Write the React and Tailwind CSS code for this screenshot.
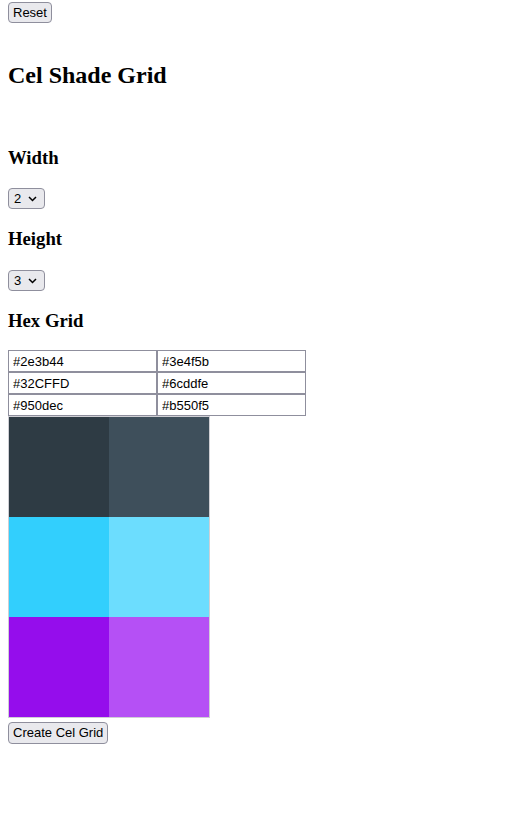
import { useState } from "react";

const defaultColors = [
  ["#2e3b44", "#3e4f5b"],
  ["#32CFFD", "#6cddfe"],
  ["#950dec", "#b550f5"],
];

const ctrl =
  "bg-[#e9e9ed] border border-[#8f8f9d] rounded-[4px] text-[13px] text-black [font-family:'Liberation_Sans',Arial,sans-serif]";

const Heading = ({ children, className }) => (
  <h3
    className={`text-[18.72px] leading-[22px] font-bold text-black [font-family:'Liberation_Serif','Times_New_Roman',serif] ${className}`}
  >
    {children}
  </h3>
);

const Chevron = () => (
  <svg width="9" height="6" viewBox="0 0 9 6" className="ml-[7px]">
    <path d="M1 1l3.5 3.5L8 1" fill="none" stroke="#000" strokeWidth="1.5" />
  </svg>
);

const Select = ({ value, className }) => (
  <div className={`${ctrl} ${className} w-[37px] h-[21px] flex items-center pl-[5px]`}>
    <span>{value}</span>
    <Chevron />
  </div>
);

export default function App() {
  const [colors, setColors] = useState(defaultColors);

  const update = (r, c) => (e) => {
    const next = colors.map((row) => row.slice());
    next[r][c] = e.target.value;
    setColors(next);
  };

  return (
    <div className="min-h-[839px] bg-white pl-2">
      <button className={`${ctrl} mt-[2px] h-[21px] px-[4px] block`}>Reset</button>

      <h1 className="mt-[38px] text-[24px] leading-[28px] font-bold text-black [font-family:'Liberation_Serif','Times_New_Roman',serif]">
        Cel Shade Grid
      </h1>

      <Heading className="mt-[58px]">Width</Heading>
      <Select value="2" className="mt-[19px]" />

      <Heading className="mt-[19px]">Height</Heading>
      <Select value="3" className="mt-[20px]" />

      <Heading className="mt-[19px]">Hex Grid</Heading>

      <div className="mt-[18px] flex flex-col">
        {colors.map((row, r) => (
          <div key={r} className="flex">
            {row.map((hex, c) => (
              <input
                key={c}
                value={hex}
                onChange={update(r, c)}
                className="w-[149px] h-[22px] border border-[#8f8f9d] bg-white px-[4px] text-[13px] text-black outline-none [font-family:'Liberation_Sans',Arial,sans-serif]"
              />
            ))}
          </div>
        ))}
      </div>

      <div className="w-[202px] border border-[#cfcfd4] flex flex-col">
        {colors.map((row, r) => (
          <div key={r} className="flex">
            {row.map((hex, c) => (
              <div key={c} className="w-[100px] h-[100px]" style={{ backgroundColor: hex }} />
            ))}
          </div>
        ))}
      </div>

      <button className={`${ctrl} mt-[4px] h-[22px] px-[4px] block`}>Create Cel Grid</button>
    </div>
  );
}
